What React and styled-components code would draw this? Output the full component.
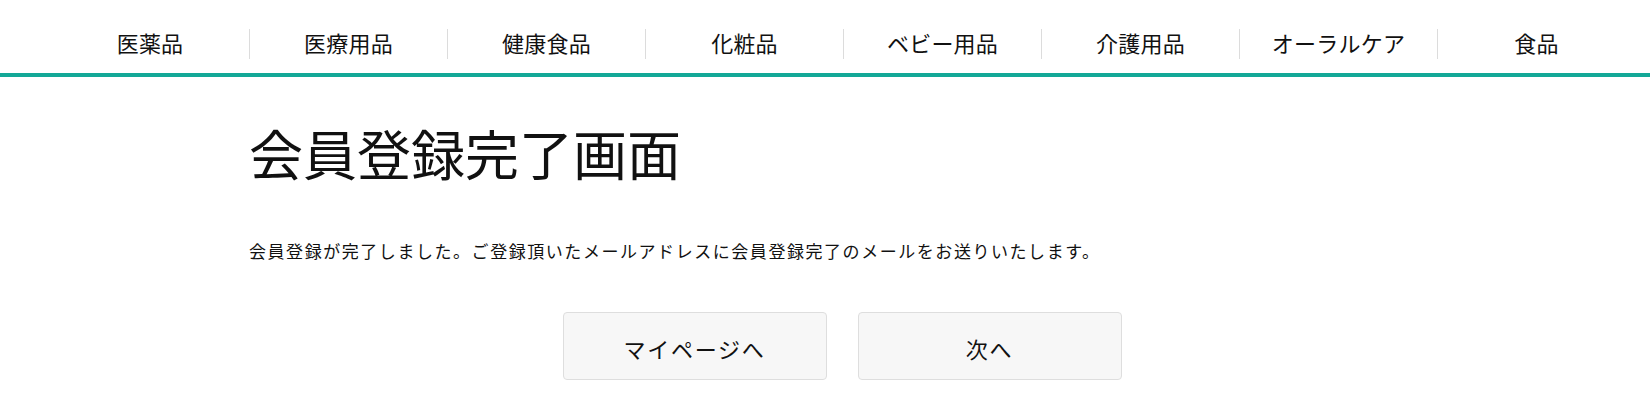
import React from "react";
import styled, { createGlobalStyle } from "styled-components";

const Global = createGlobalStyle`
  html, body { margin: 0; padding: 0; background: #fff; }
  body {
    font-family: "Noto Sans CJK JP", "Noto Sans", sans-serif;
    color: #111;
  }
`;

const Nav = styled.nav`
  display: flex;
  align-items: flex-end;
  height: 77px;
  padding-left: 51px;
  padding-bottom: 14px;
  box-sizing: border-box;
  border-bottom: 4px solid #13a897;
`;

const NavItem = styled.a`
  width: 198px;
  height: 30px;
  display: flex;
  align-items: center;
  justify-content: center;
  font-size: 22px;
  letter-spacing: 0.01em;
  color: #111;
  text-decoration: none;
  border-left: ${(p) => (p.$first ? "none" : "1px solid #dcdcdc")};
  box-sizing: border-box;
  padding-bottom: 4px;
`;

const Main = styled.main`
  width: 1186px;
  margin-left: 249px;
  display: flex;
  flex-direction: column;
`;

const Title = styled.h1`
  margin: 38px 0 0;
  font-size: 54px;
  font-weight: 400;
  line-height: 1.4;
  letter-spacing: 0;
`;

const Message = styled.p`
  margin: 47px 0 0;
  font-size: 17px;
  line-height: 1.5;
  letter-spacing: 1.55px;
`;

const Buttons = styled.div`
  display: flex;
  justify-content: center;
  gap: 31px;
  margin-top: 49px;
`;

const Button = styled.button`
  width: 264px;
  height: 68px;
  background: #f7f7f7;
  border: 1px solid #dedede;
  border-radius: 4px;
  font-family: inherit;
  font-size: 22px;
  letter-spacing: 0.08em;
  color: #111;
  cursor: pointer;
  padding: 4px 0 0;
`;

const items = ["医薬品", "医療用品", "健康食品", "化粧品", "ベビー用品", "介護用品", "オーラルケア", "食品"];

export default function App() {
  return (
    <>
      <Global />
      <Nav>
        {items.map((t, i) => (
          <NavItem key={t} href="#" $first={i === 0}>
            {t}
          </NavItem>
        ))}
      </Nav>
      <Main>
        <Title>会員登録完了画面</Title>
        <Message>会員登録が完了しました。ご登録頂いたメールアドレスに会員登録完了のメールをお送りいたします。</Message>
        <Buttons>
          <Button>マイページへ</Button>
          <Button>次へ</Button>
        </Buttons>
      </Main>
    </>
  );
}
